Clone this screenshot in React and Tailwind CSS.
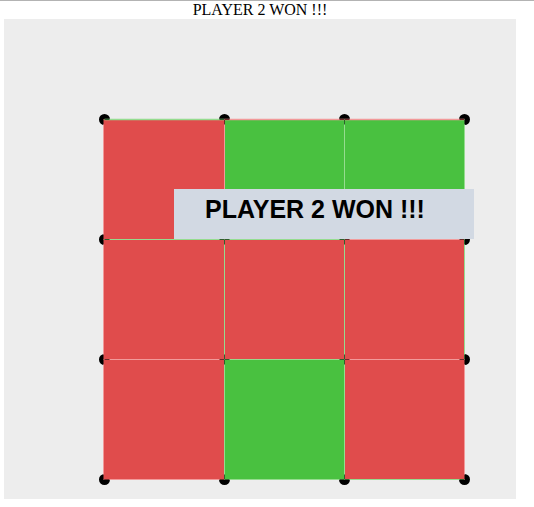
import React from "react";

const RED = "#e04c4c";
const GREEN = "#49c140";
const LINE = { g: "#95dc8f", p: "#f29a9a" };
const DARK = { g: "#2f5f2c", p: "#6e2a2a" };

const cells = [
  ["r", "g", "g"],
  ["r", "r", "r"],
  ["r", "g", "r"],
];

// horizontal edges: hEdges[j][c] (row boundary j, column c)
const hEdges = [
  ["g", "p", "p"],
  ["g", "g", "p"],
  ["p", "g", "p"],
  ["p", "g", "g"],
];
// vertical edges: vEdges[i][r] (column boundary i, row r)
const vEdges = [
  ["p", "p", "p"],
  ["p", "g", "g"],
  ["g", "g", "g"],
  ["g", "g", "p"],
];

const P = (n) => 5.5 + 120 * n;

function Board() {
  const dots = [];
  for (let i = 0; i < 4; i++)
    for (let j = 0; j < 4; j++)
      dots.push(<circle key={`d${i}${j}`} cx={P(i)} cy={P(j)} r={5.5} fill="#000" />);

  const rects = [];
  cells.forEach((row, r) =>
    row.forEach((c, k) =>
      rects.push(
        <rect key={`c${r}${k}`} x={5 + 120 * k} y={5 + 120 * r} width={120} height={120} fill={c === "r" ? RED : GREEN} />
      )
    )
  );

  const lines = [];
  hEdges.forEach((row, j) =>
    row.forEach((col, c) => {
      const y = P(j);
      const x1 = P(c);
      const x2 = P(c + 1);
      lines.push(<line key={`h${j}${c}`} x1={x1} y1={y} x2={x2} y2={y} stroke={LINE[col]} strokeWidth={j === 0 ? 1.6 : 1} />);
      lines.push(<line key={`hd1${j}${c}`} x1={x1} y1={y} x2={x1 + 5} y2={y} stroke={DARK[col]} strokeWidth={1} />);
      lines.push(<line key={`hd2${j}${c}`} x1={x2 - 5} y1={y} x2={x2} y2={y} stroke={DARK[col]} strokeWidth={1} />);
    })
  );
  vEdges.forEach((col, i) =>
    col.forEach((clr, r) => {
      const x = P(i) - (i === 0 ? 1 : 0);
      const y1 = P(r);
      const y2 = P(r + 1);
      lines.push(<line key={`v${i}${r}`} x1={x} y1={y1} x2={x} y2={y2} stroke={LINE[clr]} strokeWidth={1} />);
      lines.push(<line key={`vd1${i}${r}`} x1={x} y1={y1} x2={x} y2={y1 + 5} stroke={DARK[clr]} strokeWidth={1} />);
      lines.push(<line key={`vd2${i}${r}`} x1={x} y1={y2 - 5} x2={x} y2={y2} stroke={DARK[clr]} strokeWidth={1} />);
    })
  );

  return (
    <svg width="372" height="372" viewBox="0 0 372 372" className="block">
      {dots}
      {rects}
      {lines}
    </svg>
  );
}

export default function App() {
  return (
    <div className="min-h-[507px] w-[534px] bg-white border-t border-[#b3b3b3]">
      <div className="w-[520px] text-center">
        <div className="h-[18px] text-[16px] leading-[18px] text-black" style={{ fontFamily: '"Liberation Serif", "Times New Roman", serif' }}>
          PLAYER 2 WON !!!
        </div>
        <div className="relative ml-[4px] h-[480px] w-[512px] bg-[#ededed] pl-[95px] pt-[95px] text-left">
          <Board />
          <div className="absolute left-[170px] top-[170px] h-[50px] w-[300px] bg-[#d2d9e3] pl-[31px] pt-[8px]">
            <span className="block text-[25px] font-bold leading-[25px] text-black" style={{ fontFamily: '"Liberation Sans", Arial, sans-serif' }}>
              PLAYER 2 WON !!!
            </span>
          </div>
        </div>
      </div>
    </div>
  );
}
